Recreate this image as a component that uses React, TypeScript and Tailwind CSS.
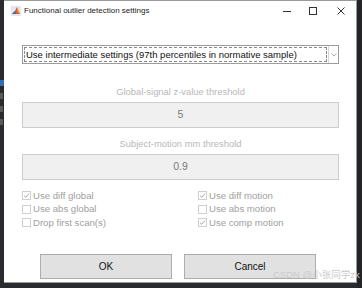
import React from "react";

const font = { fontFamily: '"Liberation Sans", Arial, sans-serif' };

function Check({ label, checked }: { label: string; checked: boolean }) {
  return (
    <div className="flex items-center h-[13.5px]">
      <span className="w-[9px] h-[9px] border border-[#cfcfcf] bg-white flex items-center justify-center">
        {checked && (
          <svg width="7" height="7" viewBox="0 0 7 7">
            <path d="M1 3.6 L2.8 5.3 L6 1.6" fill="none" stroke="#a8a8a8" strokeWidth="1" />
          </svg>
        )}
      </span>
      <span className="ml-[2px] text-[9.6px] text-[#a0a0a0] leading-none">{label}</span>
    </div>
  );
}

function Field({ label, value }: { label: string; value: string }) {
  return (
    <div className="flex flex-col items-center">
      <div className="text-[9.4px] text-[#b8b8b8] leading-none h-[12px] flex items-center">{label}</div>
      <div className="mt-[4px] w-full h-[26px] bg-[#f0f0f0] border border-[#cdcdcd] flex items-center justify-center text-[10.5px] text-[#7a7a7a]">
        {value}
      </div>
    </div>
  );
}

export default function App() {
  return (
    <div className="w-[362px] h-[288px] bg-[#2a2b2e] relative overflow-hidden flex" style={font}>
      {/* left strip, part of the window behind */}
      <div className="w-[4px] h-full flex flex-col pt-[80px] gap-[7px]">
        <div className="w-[4px] h-[6px] bg-[#2f6fb5]" />
        <div className="w-[3px] h-[6px] bg-[#5a5a5a]" />
        <div className="w-[3px] h-[6px] bg-[#5a5a5a]" />
        <div className="w-[3px] h-[6px] bg-[#5a5a5a]" />
      </div>

      <div className="w-[353px] h-[283px] bg-white border border-[#9a9a9a] border-l-0 flex flex-col">
        {/* title bar */}
        <div className="h-[20px] flex items-center pl-[7px] pr-[10px]">
          <svg width="10" height="10" viewBox="0 0 10 10">
            <rect x="0" y="0" width="10" height="10" fill="#dfe7f2" />
            <path d="M1 8 L4 5 L6 1 L9 8 Z" fill="#e0592a" />
            <path d="M1 8 L4 5 L5 8 Z" fill="#2c6db6" />
            <path d="M6 1 L7.5 5 L9 8 L6.5 6 Z" fill="#f3a43a" />
          </svg>
          <span className="ml-[3px] text-[8px] text-[#1b1b1b] leading-none">Functional outlier detection settings</span>
          <div className="ml-auto flex items-center">
            <svg width="10" height="10" viewBox="0 0 10 10" className="mr-[16px]">
              <path d="M1 5.5 H9" stroke="#333" strokeWidth="1" />
            </svg>
            <svg width="10" height="10" viewBox="0 0 10 10" className="mr-[18px]">
              <rect x="1.5" y="1.5" width="7" height="7" fill="none" stroke="#333" strokeWidth="1" />
            </svg>
            <svg width="10" height="10" viewBox="0 0 10 10">
              <path d="M1.5 1.5 L8.5 8.5 M8.5 1.5 L1.5 8.5" stroke="#333" strokeWidth="1" />
            </svg>
          </div>
        </div>

        <div className="pl-[18px] w-[335px] flex flex-col">
          {/* dropdown */}
          <div className="mt-[24px] h-[19px] border border-[#9c9c9c] bg-white flex items-stretch">
            <div className="flex-1 m-[1px] border border-dashed border-[#8a8a8a] flex items-center pl-[1px] text-[9.5px] text-[#111] leading-none">
              Use intermediate settings (97th percentiles in normative sample)
            </div>
            <div className="w-[10px] border-l border-[#d6d6d6] flex items-center justify-center">
              <svg width="6" height="4" viewBox="0 0 6 4">
                <path d="M0.5 0.5 L3 3 L5.5 0.5" fill="none" stroke="#9a9a9a" strokeWidth="0.8" />
              </svg>
            </div>
          </div>

          <div className="mt-[22px]">
            <Field label="Global-signal z-value threshold" value="5" />
          </div>
          <div className="mt-[10px]">
            <Field label="Subject-motion mm threshold" value="0.9" />
          </div>

          <div className="mt-[9px] grid grid-cols-[176px_1fr]">
            <div className="flex flex-col">
              <Check label="Use diff global" checked />
              <Check label="Use abs global" checked={false} />
              <Check label="Drop first scan(s)" checked={false} />
            </div>
            <div className="flex flex-col">
              <Check label="Use diff motion" checked />
              <Check label="Use abs motion" checked={false} />
              <Check label="Use comp motion" checked />
            </div>
          </div>

          <div className="mt-[24px] pl-[18px] flex gap-[12px]">
            <button className="w-[132px] h-[25px] bg-[#e1e1e1] border border-[#adadad] text-[10px] text-[#111]">OK</button>
            <button className="w-[132px] h-[25px] bg-[#e1e1e1] border border-[#adadad] text-[10px] text-[#111]">Cancel</button>
          </div>
        </div>
      </div>

      <div className="w-[5px] h-full bg-[#232427]" />

      {/* watermark */}
      <div
        className="absolute left-[273px] top-[270px] text-[9.5px] text-[#c9c9c9] whitespace-nowrap leading-none"
        style={{ fontFamily: '"Liberation Sans", "Noto Sans CJK SC", sans-serif' }}
      >
        CSDN @小张同学zk
      </div>
    </div>
  );
}
